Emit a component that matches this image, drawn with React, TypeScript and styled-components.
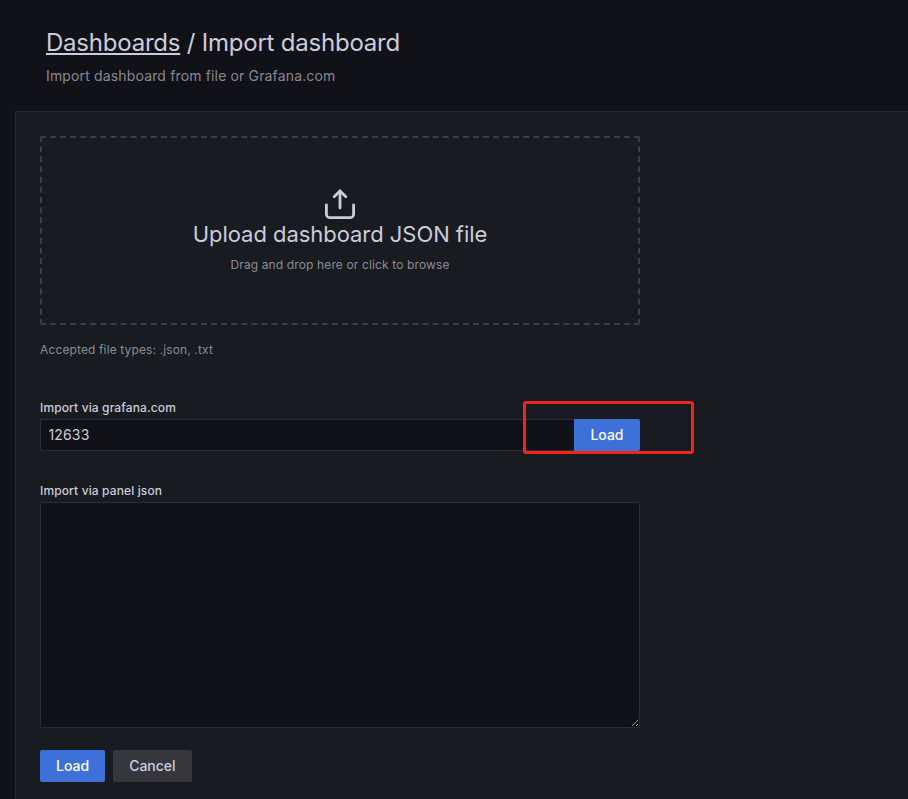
import { FC } from 'react';
import styled, { createGlobalStyle } from 'styled-components';

const GlobalStyle = createGlobalStyle`
  * {
    box-sizing: border-box;
  }

  html,
  body {
    margin: 0;
    height: 100%;
    background-color: #111217;
    overflow: hidden;
  }

  body {
    font-family: Inter, 'Noto Sans', sans-serif;
    color: #ccccdc;
  }
`;

const UploadIcon: FC = () => (
  <svg width="32" height="32" viewBox="0 0 32 32" fill="none" stroke="currentColor" strokeWidth="2.8" strokeLinecap="round" strokeLinejoin="round">
    <path d="M2.400 17v9.300a3.300 3.300 0 0 0 3.300 3.300h20.600a3.300 3.300 0 0 0 3.300-3.300V17" />
    <path d="M16 20V3" />
    <path d="M10.200 8.700 16 2.900l5.800 5.800" />
  </svg>
);

const App: FC = () => {
  return (
    <Page>
      <GlobalStyle />
      <Header>
        <Title>
          <TitleLink href="#">Dashboards</TitleLink> / Import dashboard
        </Title>
        <Subtitle>Import dashboard from file or Grafana.com</Subtitle>
      </Header>

      <Panel>
        <DropZone>
          <IconSlot>
            <UploadIcon />
          </IconSlot>
          <DropTitle>Upload dashboard JSON file</DropTitle>
          <DropHint>Drag and drop here or click to browse</DropHint>
        </DropZone>
        <FileTypes>Accepted file types: .json, .txt</FileTypes>

        <GrafanaField>
          <Label>Import via grafana.com</Label>
          <InputRow>
            <TextInput defaultValue="12633" />
            <Button $joined>Load</Button>
            <Highlight />
          </InputRow>
        </GrafanaField>

        <JsonField>
          <Label>Import via panel json</Label>
          <JsonArea />
        </JsonField>

        <Actions>
          <Button>Load</Button>
          <Button $secondary>Cancel</Button>
        </Actions>
      </Panel>
    </Page>
  );
};

export default App;

const Page = styled.div`
  width: 908px;
  height: 799px;
  display: flex;
  flex-direction: column;
  background-color: #111217;
`;

const Header = styled.header`
  height: 111px;
  padding: 27px 0 0 46px;
`;

const Title = styled.h1`
  margin: 0;
  font-size: 24px;
  line-height: 32px;
  font-weight: 400;
  letter-spacing: -0.22px;
  color: #ccccdc;
`;

const TitleLink = styled.a`
  color: #ccccdc;
  text-decoration: underline;
`;

const Subtitle = styled.p`
  margin: 7px 0 0;
  font-size: 14px;
  line-height: 20px;
  letter-spacing: 0.15px;
  color: rgba(204, 204, 220, 0.65);
`;

const Panel = styled.main`
  flex: 1;
  margin-left: 15px;
  padding: 24px 24px 0;
  background-color: #181b1f;
  border-top: 1px solid rgba(204, 204, 220, 0.07);
  border-left: 1px solid rgba(204, 204, 220, 0.07);
`;

const DropZone = styled.div`
  width: 600px;
  height: 189px;
  display: flex;
  flex-direction: column;
  align-items: center;
  padding-top: 50px;
  border: 2px dashed rgba(204, 204, 220, 0.2);
  border-radius: 2px;
`;

const IconSlot = styled.div`
  height: 32px;
  color: #ccccdc;
`;

const DropTitle = styled.div`
  font-size: 22px;
  line-height: 28px;
  letter-spacing: -0.04px;
  color: #ccccdc;
`;

const DropHint = styled.div`
  margin-top: 8px;
  font-size: 12px;
  line-height: 18px;
  letter-spacing: 0.13px;
  color: rgba(204, 204, 220, 0.65);
`;

const FileTypes = styled.div`
  margin-top: 16px;
  font-size: 12px;
  line-height: 18px;
  letter-spacing: 0.13px;
  color: rgba(204, 204, 220, 0.65);
`;

const GrafanaField = styled.section`
  margin-top: 40px;
`;

const JsonField = styled.section`
  margin-top: 31px;
`;

const Label = styled.label`
  display: block;
  margin-bottom: 2px;
  font-size: 12px;
  line-height: 18px;
  font-weight: 500;
  letter-spacing: 0.13px;
  color: #ccccdc;
`;

const InputRow = styled.div`
  position: relative;
  width: 600px;
  height: 32px;
  display: flex;
`;

const TextInput = styled.input`
  flex: 1;
  min-width: 0;
  padding: 0 7.500px 2px;
  font-family: inherit;
  font-size: 14px;
  letter-spacing: 0.15px;
  color: #ccccdc;
  background-color: #111217;
  border: 1px solid rgba(204, 204, 220, 0.15);
  border-right: none;
  border-radius: 2px 0 0 2px;
  outline: none;
`;

const Highlight = styled.div`
  position: absolute;
  left: 483px;
  top: -18px;
  width: 171px;
  height: 53px;
  border: 3px solid #f0261c;
  border-radius: 3px;
  pointer-events: none;
`;

const JsonArea = styled.textarea`
  display: block;
  width: 600px;
  height: 226px;
  padding: 4px 8px;
  font-family: inherit;
  font-size: 14px;
  color: #ccccdc;
  background-color: #111217;
  border: 1px solid rgba(204, 204, 220, 0.15);
  border-radius: 2px;
  outline: none;
`;

const Actions = styled.div`
  display: flex;
  gap: 8px;
  margin-top: 22px;
`;

const Button = styled.button<{ $secondary?: boolean; $joined?: boolean }>`
  height: 32px;
  padding: 0 ${({ $joined }) => ($joined ? '16.500px' : '16px')} 2px;
  font-family: inherit;
  font-size: 14px;
  font-weight: 500;
  color: ${({ $secondary }) => ($secondary ? '#ccccdc' : '#ffffff')};
  background-color: ${({ $secondary }) => ($secondary ? '#35373d' : '#3d71d9')};
  border: none;
  border-radius: ${({ $joined }) => ($joined ? '0 2px 2px 0' : '2px')};
  cursor: pointer;
`;
